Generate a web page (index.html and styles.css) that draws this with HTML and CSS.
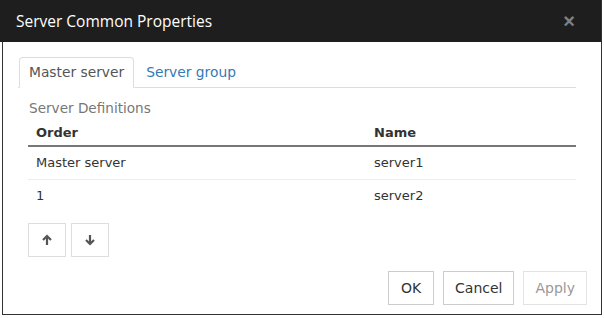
FILE: index.html
```html
<!DOCTYPE html>
<html lang="en">
<head>
  <meta charset="UTF-8">
  <title>Server Common Properties</title>
  <link rel="stylesheet" href="styles.css">
</head>
<body>
  <div class="dialog">
    <div class="dialog-header">
      <span class="dialog-title">Server Common Properties</span>
      <button class="close">&times;</button>
    </div>

    <div class="dialog-body">
      <div class="tabs">
        <button class="tab active">Master server</button>
        <button class="tab">Server group</button>
      </div>

      <div class="section-label">Server Definitions</div>
      <table class="server-table">
        <thead>
          <tr>
            <th class="col-order">Order</th>
            <th>Name</th>
          </tr>
        </thead>
        <tbody>
          <tr>
            <td>Master server</td>
            <td>server1</td>
          </tr>
          <tr>
            <td>1</td>
            <td>server2</td>
          </tr>
        </tbody>
      </table>

      <div class="move-buttons">
        <button class="move">
          <svg width="12" height="12" viewBox="0 0 12 12"><path d="M6 11V2M2 6l4-4 4 4" fill="none" stroke="#555" stroke-width="2.2"/></svg>
        </button>
        <button class="move">
          <svg width="12" height="12" viewBox="0 0 12 12"><path d="M6 1v9M2 6l4 4 4-4" fill="none" stroke="#555" stroke-width="2.2"/></svg>
        </button>
      </div>
    </div>

    <div class="dialog-footer">
      <button class="btn">OK</button>
      <button class="btn">Cancel</button>
      <button class="btn disabled">Apply</button>
    </div>
  </div>
</body>
</html>
```

FILE: styles.css
```css
body {
  margin: 0;
  font-family: 'DejaVu Sans', sans-serif;
  background: #ffffff;
}

.dialog {
  margin-left: 2px;
  width: 598px;
  height: 314px;
  border: 1px solid #333;
  border-top: none;
  background: #ffffff;
  display: flex;
  flex-direction: column;
}

.dialog-header {
  background: #1e1e1e;
  height: 42px;
  margin-left: -3px;
  display: flex;
  align-items: center;
  justify-content: space-between;
  padding: 0 26px 0 16px;
}

.dialog-title {
  color: #ffffff;
  font-family: 'Open Sans', sans-serif;
  font-size: 15.5px;
}

.close {
  background: none;
  border: none;
  color: #808080;
  font-size: 20px;
  font-weight: bold;
  padding: 0;
  cursor: pointer;
}

.dialog-body {
  flex: 1;
  padding: 15px 25px 0 15px;
}

.tabs {
  display: flex;
  border-bottom: 1px solid #ddd;
  padding-left: 1px;
}

.tab {
  font-family: inherit;
  font-size: 13.8px;
  background: none;
  border: 1px solid transparent;
  border-radius: 4px 4px 0 0;
  padding: 6px 9px 7px;
  margin-bottom: -1px;
  margin-right: 2px;
  color: #337ab7;
  cursor: pointer;
}

.tab.active {
  color: #555;
  border-color: #ddd;
  border-bottom-color: #fff;
  background: #fff;
}

.section-label {
  color: #777;
  font-size: 13.6px;
  margin: 12px 0 4px 11px;
}

.server-table {
  margin-left: 10px;
  width: 548px;
  border-collapse: collapse;
  font-size: 13px;
  color: #333;
}

.server-table th {
  text-align: left;
  padding: 5px 8px 5px;
  border-bottom: 2px solid #777;
}

.server-table td {
  padding: 8px 8px 9px;
  border-top: 1px solid #eee;
}

.server-table tbody tr:first-child td {
  border-top: none;
}

.col-order {
  width: 322px;
}

.move-buttons {
  display: flex;
  gap: 5px;
  margin: 11px 0 0 10px;
}

.move {
  width: 38px;
  height: 34px;
  background: #fff;
  border: 1px solid #ddd;
  display: flex;
  align-items: center;
  justify-content: center;
  cursor: pointer;
}

.dialog-footer {
  display: flex;
  justify-content: flex-end;
  gap: 9px;
  padding: 0 14px 9px 0;
}

.btn {
  font-family: inherit;
  font-size: 14px;
  height: 34px;
  min-width: 46px;
  padding: 0 11px;
  background: #fff;
  border: 1px solid #ccc;
  color: #333;
  cursor: pointer;
}

.btn.disabled {
  color: #999;
  border-color: #e3e3e3;
}
```
